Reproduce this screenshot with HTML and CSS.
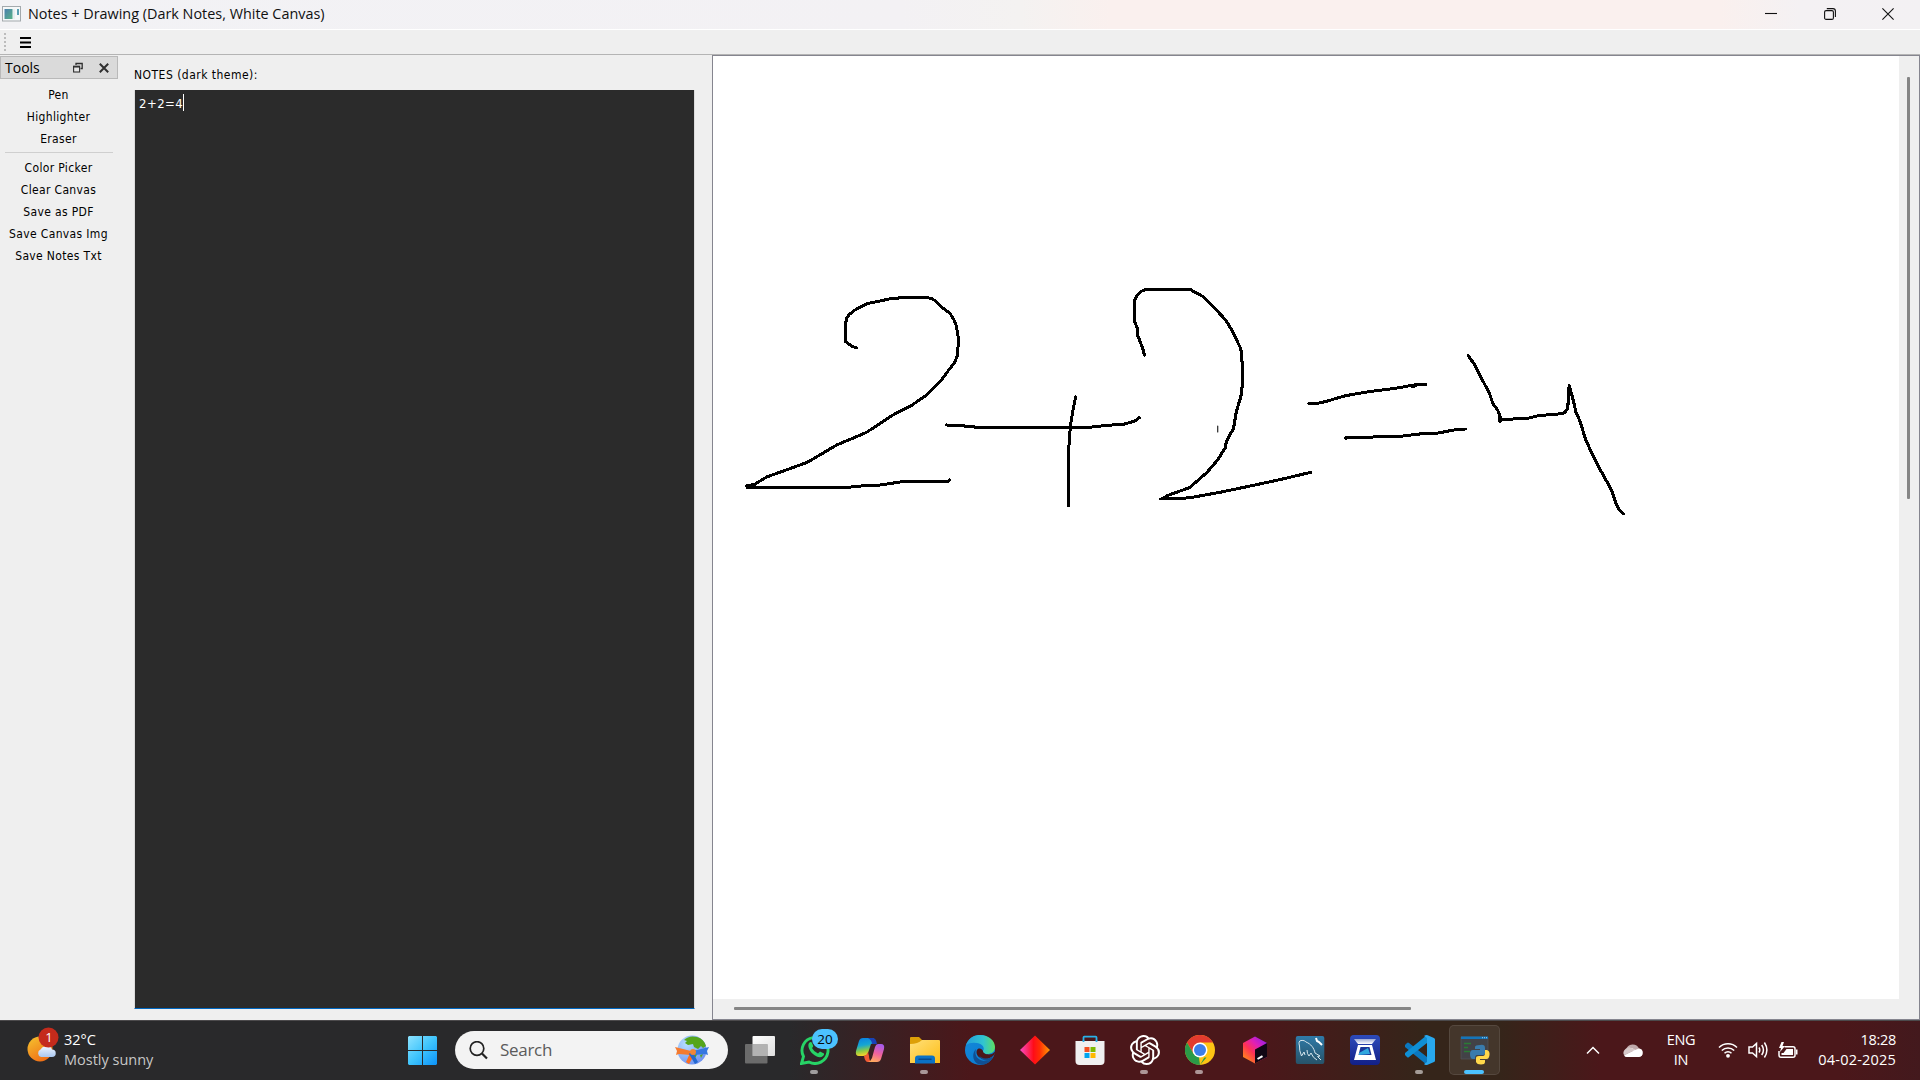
FILE: index.html
```html
<!DOCTYPE html>
<html lang="en">
<head>
<meta charset="utf-8">
<title>Notes + Drawing (Dark Notes, White Canvas)</title>
<link rel="stylesheet" href="styles.css">
</head>
<body>
<div class="screen">
  <header class="titlebar">
    <svg class="app-icon" width="19" height="16" viewBox="0 0 19 16"><defs><linearGradient id="app" x1="0" y1="0" x2="1" y2="1"><stop offset="0" stop-color="#4a7fae"/><stop offset="1" stop-color="#57b287"/></linearGradient></defs><rect x=".5" y=".5" width="18" height="14.500" fill="#f5f8f9" stroke="#a3a9ad"/><rect x="2.500" y="3" width="8" height="10" fill="url(#app)"/><path d="M12 3v10" stroke="#dbe4e8"/><path d="M16 3v6" stroke="#5a9fb4" stroke-width="2"/></svg>
    <span class="window-title">Notes + Drawing (Dark Notes, White Canvas)</span>
    <div class="window-controls">
      <svg width="12" height="12" viewBox="0 0 12 12"><path d="M0 5.500h12"/></svg>
      <svg width="12" height="12" viewBox="0 0 12 12"><rect x=".6" y="2.600" width="8.800" height="8.800" rx="1.500"/><path d="M2.800.6H9q2.400 0 2.400 2.400v6"/></svg>
      <svg width="12" height="12" viewBox="0 0 12 12"><path d="M.4.4l11.200 11.200M11.600.4L.4 11.600"/></svg>
    </div>
  </header>
  <div class="toolbar">
    <span class="grip"></span>
    <svg class="menu-icon" width="11" height="11" viewBox="0 0 11 11"><path d="M0 1h11M0 5.500h11M0 10h11" stroke="#000" stroke-width="2"/></svg>
  </div>
  <main class="workspace">
    <aside class="tools">
      <div class="dock-title"><span class="dock-name">Tools</span>
        <svg width="10" height="11" viewBox="0 0 10 11"><path d="M3 3V1.500h6.200v5H7.500M3 1.500h6.500" fill="none" stroke="#303030" stroke-width="1.300"/><rect x=".6" y="4.200" width="6" height="5.800" fill="#e6e6e6" stroke="#303030" stroke-width="1.100"/><path d="M0 4.800h7" stroke="#303030" stroke-width="1.500"/></svg>
        <svg width="10" height="10" viewBox="0 0 10 10"><path d="M.8.8l8.400 8.400M9.200.8L.8 9.200" stroke="#303030" stroke-width="2"/></svg>
      </div>
      <nav class="tool-list">
        <span>Pen</span><span>Highlighter</span><span>Eraser</span>
        <hr>
        <span>Color Picker</span><span>Clear Canvas</span><span>Save as PDF</span><span>Save Canvas Img</span><span>Save Notes Txt</span>
      </nav>
    </aside>
    <section class="notes">
      <div class="notes-label">NOTES (dark theme):</div>
      <div class="editor"><span class="note-text">2+2=4</span><i class="caret"></i></div>
    </section>
    <section class="canvas-frame">
      <svg class="canvas" width="1186" height="943" viewBox="0 0 1186 943">
        <g transform="translate(17 214) scale(.33333)">
          <path d="M379 233L366 229L347 215V160L350 145L357 134L375 120L395 109L415 100L440 95L478 87L515 83H593L605 86L617 93L635 111L660 130L672 150L679 168L685 203V220L682 257L674 278L660 295L634 330L587 377L545 406L492 433L408 488L320 525L232 577L160 603L110 621L75 642L50 648L52 652H358L375 649L450 645L518 635H652L659 630"/>
          <path d="M52 650L72 645" stroke-width="12"/>
          <path d="M649 465L683 466L743 472H1078L1130 466L1180 463L1215 453L1228 443M1037 381L1028 425L1021 468L1016 540V708"/>
        </g>
        <g transform="translate(407 214) scale(.3442 .33333)">
          <path d="M71 255L66 235L51 195L50 174L42 153V91L49 78L62 64L76 58H203L240 79L272 111L306 149L322 175L351 236L356 290V340L352 376L338 425L330 475L310 512L305 535L282 572L252 608L202 653L142 675L119 687H165L210 682L290 667L360 652L460 630L554 607"/>
          <path d="M549 400L574 400L600 394L655 377L730 364L800 355L865 343H889M850 350L858 347M656 505V502H718L770 499H815L870 492L925 489L970 480L1003 477"/>
          <path d="M1012 257L1030 284L1074 372L1083 400L1097 420L1104 438V456M1104 450L1120 448L1185 445L1215 437L1285 431L1294 426L1301 414L1303 375L1305 347L1313 375L1325 427L1337 455L1353 510L1385 580L1428 660L1441 701L1450 718L1462 732"/>
          <path d="M284 468V486" stroke-width="3"/>
        </g>
      </svg>
      <div class="scroll-y"><i></i></div>
      <div class="scroll-x"><i></i></div>
    </section>
  </main>
  <footer class="taskbar">
    <div class="weather">
      <svg width="32" height="36" viewBox="0 0 32 36"><defs><linearGradient id="sun" x1="0" y1="0" x2=".6" y2="1"><stop stop-color="#f5c52f"/><stop offset="1" stop-color="#f06f16"/></linearGradient><linearGradient id="cloud" x2="0" y2="1"><stop stop-color="#edf5ff"/><stop offset="1" stop-color="#a9c7f0"/></linearGradient></defs><circle cx="13" cy="22" r="12.500" fill="url(#sun)"/><path d="M14 30a4 4 0 0 1-.5-7.500q2.500-4 6.500-2.500 4-1.500 5 2.500a3.500 3.500 0 0 1 0 7.500z" fill="url(#cloud)"/><circle cx="21.500" cy="10.500" r="10" fill="#c42b1c"/><text x="22" y="15.200" text-anchor="middle" font-size="13" fill="#fff">1</text></svg>
      <div class="weather-text"><span>32°C</span><span class="dim">Mostly sunny</span></div>
    </div>
    <svg class="start" width="29" height="29" viewBox="0 0 29 29"><defs><linearGradient id="win" x2="1" y2="1"><stop stop-color="#8ee3ff"/><stop offset=".5" stop-color="#3fc4fc"/><stop offset="1" stop-color="#0b92f8"/></linearGradient></defs><path d="M1 0h13v14H0V1zM15 0h13l1 1v13H15zM0 15h14v14H1l-1-1zM15 15h14v13l-1 1H15z" fill="url(#win)"/></svg>
    <div class="search">
      <svg width="19" height="19" viewBox="0 0 19 19"><circle cx="8" cy="7.500" r="6.800" fill="none" stroke="#222" stroke-width="1.700"/><path d="M13 12.500l5 5" stroke="#222" stroke-width="2.200"/></svg>
      <span class="search-text">Search</span>
      <svg class="globe" width="34" height="30" viewBox="0 0 34 30"><defs><radialGradient id="earth" cx=".3" cy=".3" r=".8"><stop stop-color="#b5ddff"/><stop offset="1" stop-color="#6c8ff0"/></radialGradient></defs><circle cx="17" cy="15" r="14.500" fill="url(#earth)"/><path d="M9 5q5-5 13-3 7 2 9 9l-3 2-2-2-3 3-4-2-1-3-5 1-3-2 2-2zM16 16l5-1 2 3-3 5-3-2zM25 20l3-1-2 4z" fill="#55a51b"/><path d="M0 12l4 1 12 3-1 4-11-1-3 1 1-4z" fill="#f47b30"/><path d="M34 12l-4 1-12 3 1 4 11-1 3 1-1-4z" fill="#3677e0"/><path d="M16 16l4 3-6 10-3-2z" fill="#ff6e1f"/><path d="M17 16l-3 3 6 10 3-2z" fill="#2569cf"/><circle cx="18" cy="17" r="3" fill="#ef8637"/></svg>
    </div>
    <div class="apps">
      <div class="app"><svg viewBox="0 0 30 30"><defs><linearGradient id="tv" x2="1" y2="1"><stop stop-color="#fff"/><stop offset="1" stop-color="#dedede"/></linearGradient></defs><rect x="7.500" y="1" width="22.500" height="20" rx="1" fill="url(#tv)"/><rect y="9" width="22.500" height="19.500" rx="1" fill="#777" opacity=".85"/><path d="M7.500 9h15v12h-15z" fill="#b2b2b2"/></svg></div>
      <div class="app running"><svg viewBox="0 0 30 30"><path d="M1.500 28.500l2-7A13 13 0 1 1 9 27z" fill="none" stroke="#27d366" stroke-width="2.900"/><path d="M9 8q2-2 3 0l1.200 3q0 1-1.200 2 2 4 6 5.500l2-2 4 2q.5 1-1 2.500c-3 2.500-7 .5-10-2S7 11 9 8z" fill="#27d366"/></svg><span class="badge">20</span></div>
      <div class="app"><svg viewBox="0 0 30 30"><defs><linearGradient id="cp1" x2=".2" y2="1"><stop stop-color="#087ee5"/><stop offset=".45" stop-color="#16a6d2"/><stop offset=".75" stop-color="#8acb45"/><stop offset="1" stop-color="#f3d32c"/></linearGradient><linearGradient id="cp2" x1=".6" x2=".3" y2="1"><stop stop-color="#a65be9"/><stop offset=".5" stop-color="#f0629e"/><stop offset="1" stop-color="#ffad5b"/></linearGradient></defs><path d="M8 3h9q3 0 4 5l-5 1-3 9q-1 3-5 3H4q-4 0-3-5L4 6q1-3 4-3z" fill="url(#cp1)"/><path d="M16 3h2q3 0 4 6h-5q0-4-4-6z" fill="#1842b8"/><path d="M9 21q3-1 4-4l1 4q0 5 3 6h-4q-3 0-4-6z" fill="#f15a35"/><path d="M23 9h3q4 0 3 5l-3 10q-1 3-4 3h-9q3-1 4-4l3-11q1-3 3-3z" fill="url(#cp2)"/></svg></div>
      <div class="app running"><svg viewBox="0 0 30 30"><defs><linearGradient id="fold" x2="1" y2="1"><stop stop-color="#ffe07a"/><stop offset="1" stop-color="#fdbd16"/></linearGradient></defs><path d="M0 3q0-1 1-1h8l3 3v4H0z" fill="#dda008"/><path d="M0 9q8 0 12-4h17q1 0 1 1v22H0z" fill="url(#fold)"/><path d="M5 28.500v-5q0-3 3-3h14q3 0 3 3v5z" fill="#0b72c5"/><path d="M9 24.200h12" stroke="#064a8d" stroke-width="1.500" stroke-linecap="round"/></svg></div>
      <div class="app"><svg viewBox="0 0 30 30"><defs><linearGradient id="e1" x2="1"><stop stop-color="#249edb"/><stop offset=".6" stop-color="#31c4d0"/><stop offset="1" stop-color="#5dde62"/></linearGradient><linearGradient id="e2" x2="1" y2="1"><stop stop-color="#1689d8"/><stop offset="1" stop-color="#0678d2"/></linearGradient></defs><circle cx="15" cy="15" r="15" fill="url(#e2)"/><path d="M1 10C4 2 10 0 15 0c9 0 15 6 15 12 0 5-4 7-8 7-3 0-5-1-4-3 2-3 0-7-6-8Q5 7 1 10z" fill="url(#e1)"/><path d="M11 14c-2 6 1 11 8 12q5 0 8-2c-4 5-9 7-14 5-6-3-6-11-2-15z" fill="#114f93"/><path d="M18 16c-1-2-4-4-6-1-2 4 2 9 8 9 4 0 7-2 9-4l2-4-4 3c-4 1-9 0-9-3z" fill="#4b171a"/><path d="M14 20c2 4 9 5 14 1l-1 3c-4 3-11 2-13-4z" fill="#114f93"/></svg></div>
      <div class="app"><svg viewBox="0 0 30 30"><defs><linearGradient id="dia" x2="1"><stop stop-color="#f84cc9"/><stop offset=".45" stop-color="#ff0d18"/><stop offset=".65" stop-color="#ff2b05"/><stop offset="1" stop-color="#ff9c05"/></linearGradient></defs><path d="M15 .5L30 15 15 29.500 0 15z" fill="url(#dia)"/></svg></div>
      <div class="app"><svg viewBox="0 0 30 30"><path d="M8.500 7V2.500q0-.8.8-.8h11.400q.8 0 .8.800V7" fill="none" stroke="#29b1e8" stroke-width="1.800"/><path d="M.5 6h29v20q0 4-4 4h-21q-4 0-4-4z" fill="#f0f0f0"/><path d="M8.500 7V5.500M21.500 7V5.500" stroke="#29b1e8" stroke-width="1.800"/><path d="M9.500 12h5v5h-5z" fill="#f25022"/><path d="M15.500 12h5v5h-5z" fill="#7fba00"/><path d="M9.500 18h5v5h-5z" fill="#00a4ef"/><path d="M15.500 18h5v5h-5z" fill="#ffb900"/></svg></div>
      <div class="app running"><svg viewBox="0 0 24 24"><path fill="#fff" d="M22.2819 9.8211a5.9847 5.9847 0 0 0-.5157-4.9108 6.0462 6.0462 0 0 0-6.5098-2.9A6.0651 6.0651 0 0 0 4.9807 4.1818a5.9847 5.9847 0 0 0-3.9977 2.9 6.0462 6.0462 0 0 0 .7427 7.0966 5.98 5.98 0 0 0 .511 4.9107 6.051 6.051 0 0 0 6.5146 2.9001A5.9847 5.9847 0 0 0 13.2599 24a6.0557 6.0557 0 0 0 5.7718-4.2058 5.9894 5.9894 0 0 0 3.9977-2.9001 6.0557 6.0557 0 0 0-.7475-7.0729zm-9.022 12.6081a4.4755 4.4755 0 0 1-2.8764-1.0408l.1419-.0804 4.7783-2.7582a.7948.7948 0 0 0 .3927-.6813v-6.7369l2.02 1.1686a.071.071 0 0 1 .038.052v5.5826a4.504 4.504 0 0 1-4.4945 4.4944zm-9.6607-4.1254a4.4708 4.4708 0 0 1-.5346-3.0137l.142.0852 4.783 2.7582a.7712.7712 0 0 0 .7806 0l5.8428-3.3685v2.3324a.0804.0804 0 0 1-.0332.0615L9.74 19.9502a4.4992 4.4992 0 0 1-6.1408-1.6464zM2.3408 7.8956a4.485 4.485 0 0 1 2.3655-1.9728V11.6a.7664.7664 0 0 0 .3879.6765l5.8144 3.3543-2.0201 1.1685a.0757.0757 0 0 1-.071 0l-4.8303-2.7865A4.504 4.504 0 0 1 2.3408 7.872zm16.5963 3.8558L13.1038 8.364 15.1192 7.2a.0757.0757 0 0 1 .071 0l4.8303 2.7913a4.4944 4.4944 0 0 1-.6765 8.1042v-5.6772a.79.79 0 0 0-.407-.667zm2.0107-3.0231l-.142-.0852-4.7735-2.7818a.7759.7759 0 0 0-.7854 0L9.409 9.2297V6.8974a.0662.0662 0 0 1 .0284-.0615l4.8303-2.7866a4.4992 4.4992 0 0 1 6.6802 4.66zM8.3065 12.863l-2.02-1.1638a.0804.0804 0 0 1-.038-.0567V6.0742a4.4992 4.4992 0 0 1 7.3757-3.4537l-.142.0805L8.704 5.459a.7948.7948 0 0 0-.3927.6813zm1.0976-2.3654l2.602-1.4998 2.6069 1.4998v2.9994l-2.5974 1.4997-2.6067-1.4997Z"/></svg></div>
      <div class="app running"><svg viewBox="0 0 30 30"><circle cx="15" cy="15" r="15" fill="#fdc414"/><path d="M2 7.500A15 15 0 0 1 28 7.500H15L8.500 18.800z" fill="#e33b2e"/><path d="M2 7.500L8.500 18.750 15 22.500h6.500L15 30A15 15 0 0 1 2 7.500z" fill="#2b9a48"/><path d="M21.500 18.750L15 30l-1-7.500z" fill="#fdc414"/><circle cx="15" cy="15" r="7.500" fill="#fff"/><circle cx="15" cy="15" r="6" fill="#3c7ee9"/></svg></div>
      <div class="app"><svg viewBox="0 0 30 30"><defs><linearGradient id="jb" x1=".1" y1=".9" x2=".8" y2=".1"><stop stop-color="#ff8b19"/><stop offset=".4" stop-color="#ff3353"/><stop offset=".7" stop-color="#e120b4"/><stop offset="1" stop-color="#a31fe0"/></linearGradient></defs><path d="M15 1.500L27 8v14l-12 6.500L3 22V8z" fill="url(#jb)"/><path d="M27 8v14l-12 6.500V14.500z" fill="#100714"/><path d="M17.500 24l5-2.800" stroke="#fff" stroke-width="2"/></svg></div>
      <div class="app"><svg viewBox="0 0 30 30"><defs><linearGradient id="my" x2="0" y2="1"><stop stop-color="#2f7aa8"/><stop offset="1" stop-color="#275369"/></linearGradient></defs><rect x=".8" y="1" width="28.500" height="28" rx="2" fill="url(#my)"/><path d="M10 20l-1-3-2.500 4Q4 15 4.500 11 3 6 6 5.500c3-.3 4 .5 5 1.500 5 2 8 6 9 11l5 3-2.500.5L26 25M12 15q0 4 2 6l2-3q2 5 6 7" fill="none" stroke="#d7e6ed" stroke-width="1"/><path d="M21 3l1 3 2 1 3 3" fill="none" stroke="#fff" stroke-width="2"/></svg></div>
      <div class="app"><svg viewBox="0 0 30 30"><defs><linearGradient id="sc" x2="0" y2="1"><stop stop-color="#2d4bbb"/><stop offset="1" stop-color="#122088"/></linearGradient><linearGradient id="scw" x2="0" y2="1"><stop stop-color="#9ba8d5"/><stop offset="1" stop-color="#fff"/></linearGradient></defs><rect width="30" height="30" rx="4" fill="url(#sc)"/><path d="M4 4h22l-4 5H8z" fill="url(#scw)"/><path d="M8 10h14l4 15H4z" fill="#fff"/><path d="M10.500 12h9l2 8h-13z" fill="#1b3698"/><path d="M9 18l9-5 2 6-11 1z" fill="#31a8df"/></svg></div>
      <div class="app running"><svg viewBox="0 0 30 30"><path d="M0 10l2-2q1-1 2 0l18 14v8L0 12q-.7-1 0-2z" fill="#0b78bf"/><path d="M0 20l2 2q1 1 2 0L22 8V0L0 18q-.7 1 0 2z" fill="#0f8fd5"/><path d="M22 0l7 3q1 .5 1 1.500v21q0 1-1 1.500l-7 3q-2 .2-3-1l3-2V3l-3-2q1-1 3-1z" fill="#28a8ee"/></svg></div>
      <div class="app active"><svg viewBox="0 0 30 30"><path d="M1 2h27v22H1z" fill="#424247" stroke="#55555a" stroke-width=".7"/><path d="M1 1.500h27v2.500H1z" fill="#1474b8"/><path d="M22 2.700h5" stroke="#9ed0ed" stroke-dasharray="1 1"/><path d="M4 8.500h7M4 12.500h4M4 16.500h6" stroke="#2a7b34" stroke-width="1.300"/><path d="M20 10q5-1 5 3v5q0 2-3 2h-5q-2 0-2 4h-2q-3 0-3-5 0-4 3-4h7v-1h-5v-2q0-2 5-2z" fill="#397bad"/><path d="M25 15h2q3 1 2.500 5t-3 4H20v1h5v2q0 2.500-4 2.500t-5-2.500v-4q0-2 3-2h4q2 0 2-3z" fill="#ffd84b"/></svg></div>
    </div>
    <div class="tray">
      <svg class="chevron" width="14" height="9" viewBox="0 0 14 9"><path d="M1 7.500l6-6 6 6"/></svg>
      <svg class="onedrive" width="20" height="13" viewBox="0 0 20 13"><path d="M4 13A4 4 0 0 1 3 5.500 7 7 0 0 1 16 4.500a4.300 4.300 0 0 1 0 8.500z" fill="#bfa9ab"/><path d="M4 4q5-1 8 2l4-1.500a4.300 4.300 0 0 1 0 8.500H4q-2 0-3-1.500L10 7z" fill="#fff"/><path d="M4 4q5-1 8 2L1 11Q-1 7 4 4z" fill="#d5c8c9"/></svg>
      <div class="lang"><span>ENG</span><span>IN</span></div>
      <svg class="wifi" width="20" height="16" viewBox="0 0 20 16"><path d="M1 5.500a12.800 12.800 0 0 1 18 0M3.800 8.500a8.800 8.800 0 0 1 12.400 0M6.500 11.300a5 5 0 0 1 7 0"/><circle cx="10" cy="13.800" r="1.900" fill="#fff" stroke="none"/></svg>
      <svg class="sound" width="20" height="18" viewBox="0 0 20 18"><path d="M1 6h3.500L8.500 2.500v13L4.500 12H1zM11 6.500q1.600 2.500 0 5M13.700 4q3.500 5 0 10M16.400 1.500q5 7.500 0 15"/></svg>
      <svg class="battery" width="20" height="17" viewBox="0 0 20 17"><path d="M6.500 4.700H15q2 0 2 2v6.600q0 2-2 2H3q-2 0-2-2V9" /><path d="M18 7.500h1.500v5H18z" fill="#fff" stroke="none"/><path d="M8.500 7h6.500v6H3.500v-2h2z" fill="#fff" stroke="none"/><path d="M3.500 0L1 6h2L2 10l5-6H4.500L6 0z" fill="#fff" stroke="none"/></svg>
      <div class="clock"><span>18:28</span><span class="date">04-02-2025</span></div>
    </div>
  </footer>
</div>
</body>
</html>
```
FILE: styles.css
```css
* { box-sizing: border-box; }
body { margin: 0; background: #efefef; font-family: "Open Sans", "Noto Sans", sans-serif; overflow: hidden; }
svg { display: block; flex: none; }
.screen { width: 1920px; height: 1080px; display: flex; flex-direction: column; }

.titlebar { height: 30px; flex: none; display: flex; align-items: center; padding: 0 26px 2px 2px; border-bottom: 1px solid #fff; background: linear-gradient(90deg, #f2f2f5 0, #f3f1f4 900px, #f4f2f1 1020px, #faf0ee 1110px, #faf0ee 1720px, #f4f1f3 1800px, #f3f1f3 100%); }
.window-title { margin: 1px 0 0 7px; font-size: 14.400px; line-height: 20px; color: #101010; white-space: nowrap; }
.window-controls { margin-left: auto; display: flex; gap: 46.500px; }
.window-controls svg { fill: none; stroke: #111; stroke-width: 1.1; }

.toolbar { height: 25px; flex: none; display: flex; align-items: center; padding-left: 4px; background: #efefef; border-bottom: 1px solid #b4b4b4; }
.grip { width: 2px; height: 18px; background: repeating-linear-gradient(#bcbcbc 0 2px, transparent 2px 4px); }
.menu-icon { margin-left: 14px; }

.workspace { height: 965px; flex: none; display: flex; background: #efefef; font-family: "DejaVu Sans Condensed", "DejaVu Sans", sans-serif; font-stretch: condensed; color: #000; }
.tools { width: 118px; padding-top: 1px; }
.dock-title { height: 23px; display: flex; align-items: center; gap: 16px; padding: 0 8px 0 4px; border: 1px solid #b9b9b9; background: #dadada; }
.dock-name { margin-right: auto; font-family: "Open Sans", sans-serif; font-stretch: normal; font-size: 14px; line-height: 20px; }
.tool-list { display: flex; flex-direction: column; padding: 5px 6px 0 5px; text-align: center; font-size: 12px; letter-spacing: .35px; }
.tool-list span { height: 22px; line-height: 22px; white-space: nowrap; }
.tool-list hr { width: 108px; height: 1px; margin: 2px 0 4px; border: 0; background: #cfcfcf; }

.notes { width: 594px; padding: 8px 17px 0 16px; }
.notes-label { height: 27px; line-height: 25px; font-size: 12px; letter-spacing: .48px; }
.editor { height: 919px; display: flex; padding: 4px 0 0 4px; background: #2b2b2b; border-left: 1px solid #dcdcdc; border-right: 1px solid #dcdcdc; border-bottom: 1px solid #0067c0; color: #fff; font-size: 13px; line-height: 19px; letter-spacing: .45px; }
.caret { width: 1px; height: 17px; background: #fff; }

.canvas-frame { width: 1208px; height: 965px; display: grid; grid-template: 943px 20px / 1186px 20px; border: 1px solid #85858f; background: #efefef; }
.canvas { background: #fff; fill: none; stroke: #000; stroke-width: 9; stroke-linecap: round; stroke-linejoin: round; shape-rendering: crispEdges; }
.scroll-y { padding: 21px 0 0 8px; }
.scroll-y i { display: block; width: 3px; height: 422px; border-radius: 1px; background: #858585; }
.scroll-x { padding: 8px 0 0 21px; }
.scroll-x i { display: block; width: 677px; height: 3px; border-radius: 1px; background: #858585; }

.taskbar { height: 60px; flex: none; display: flex; align-items: center; padding-bottom: 1px; border-top: 1px solid #4c4a4c; color: #fff; background: linear-gradient(90deg, #29292b 0, #29292b 790px, #4b171a 970px, #4b171a 1260px, #35251a 1420px, #35251a 1500px, #4b171a 1600px, #4b171a 1840px, #43191d 1920px); }
.weather { width: 380px; margin-left: 27px; height: 58px; display: flex; gap: 5px; padding-top: 6px; }
.weather-text { display: flex; flex-direction: column; font-size: 14.500px; line-height: 20px; padding-top: 3px; }
.dim { color: #c7c7c7; }
.start { margin-left: 1px; }
.search { width: 273px; height: 38px; margin: 0 4px 0 18px; border-radius: 19px; background: #f3f3f3; display: flex; align-items: center; padding: 0 19px 0 14px; }
.search-text { margin-left: 12px; font-size: 17px; letter-spacing: -.3px; line-height: 24px; color: #5b5b5b; }
.globe { margin-left: auto; }
.apps { display: flex; }
.app { position: relative; width: 55px; height: 50px; display: flex; align-items: center; justify-content: center; }
.app svg { width: 30px; height: 30px; }
.running::after, .active::after { content: ""; position: absolute; bottom: 1px; left: 23px; width: 8px; height: 4px; border-radius: 2px; background: rgba(255,255,255,.55); }
.active::before { content: ""; position: absolute; inset: 0 2px; border: 1px solid rgba(255,255,255,.09); border-radius: 5px; background: rgba(255,255,255,.08); }
.active svg { position: relative; }
.active::after { left: 17px; width: 20px; background: #4cc2ff; }
.badge { position: absolute; left: 25px; top: 4px; width: 26px; height: 20px; border-radius: 10px; background: #4cc2ff; color: #080808; font-size: 13.500px; line-height: 20px; text-align: center; }
.tray { flex: 1; display: flex; align-items: center; font-size: 14.500px; line-height: 20px; letter-spacing: -.3px; }
.tray svg { fill: none; stroke: #fff; stroke-width: 1.500; }
.chevron { margin-left: 84px; }
.tray .onedrive { stroke: none; margin-left: 23px; }
.lang { width: 40px; margin-left: 18px; display: flex; flex-direction: column; align-items: center; }
.wifi { margin-left: 17px; }
.sound { margin-left: 10px; }
.battery { margin-left: 10px; }
.clock { margin-left: auto; margin-right: 24px; display: flex; flex-direction: column; align-items: flex-end; }
.date { letter-spacing: .2px; }
```
